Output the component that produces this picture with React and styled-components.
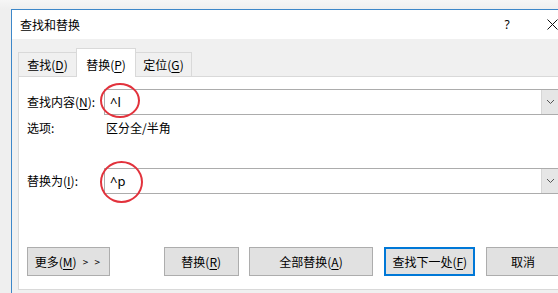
import React from "react";
import styled, { createGlobalStyle } from "styled-components";

const GlobalStyle = createGlobalStyle`
  html, body { margin: 0; padding: 0; }
  body {
    background: #f3f3f3;
    overflow: hidden;
    font-family: "Microsoft YaHei UI", "Noto Sans CJK SC", "Noto Sans", sans-serif;
    font-size: 12px;
    color: #000;
  }
`;

const Frame = styled.div`
  padding: 9px 0 0 11px;
  width: 558px;
  height: 293px;
  box-sizing: border-box;
  overflow: hidden;
  background: linear-gradient(180deg, #f6f6f6 0px, #efefef 9px);
`;

const Dialog = styled.div`
  width: 564px;
  height: 300px;
  flex: none;
  box-sizing: border-box;
  border-top: 1px solid #3d87c9;
  border-left: 1px solid #3d87c9;
  background: #f0f0f0;
  display: flex;
  flex-direction: column;
`;

const TitleBar = styled.div`
  height: 29px;
  background: #fff;
  display: flex;
  align-items: center;
  padding-left: 8px;
`;

const Title = styled.div`
  flex: 1;
  font-size: 12px;
  line-height: 16px;
`;

const TitleButton = styled.div`
  width: ${(p) => p.$w}px;
  height: 29px;
  display: flex;
  align-items: center;
  justify-content: center;
  font-family: "Segoe UI", "Noto Sans", "DejaVu Sans", sans-serif;
  font-size: 12px;
  margin-left: ${(p) => p.$ml || 0}px;
`;

const Body = styled.div`
  flex: 1;
  padding: 9px 0 0 6px;
  display: flex;
  flex-direction: column;
`;

const TabRow = styled.div`
  display: flex;
  align-items: flex-end;
  height: 29px;
  margin-bottom: -1px;
  position: relative;
  z-index: 1;
`;

const Tab = styled.div`
  box-sizing: border-box;
  width: ${(p) => p.$w}px;
  height: ${(p) => (p.$active ? 29 : 25)}px;
  margin-left: ${(p) => (p.$first ? 0 : -1)}px;
  border: 1px solid #d9d9d9;
  border-bottom: ${(p) => (p.$active ? "none" : "1px solid #d9d9d9")};
  background: ${(p) => (p.$active ? "#fff" : "#f0f0f0")};
  display: flex;
  align-items: center;
  justify-content: center;
  padding-top: ${(p) => (p.$active ? 2 : 0)}px;
  font-size: 12px;
  position: relative;
  z-index: ${(p) => (p.$active ? 2 : 1)};
`;

const U = styled.span`
  text-decoration: underline;
  text-underline-offset: 2px;
`;

const Panel = styled.div`
  box-sizing: border-box;
  height: 214px;
  background: #fff;
  border: 1px solid #d9d9d9;
  border-right: none;
  padding: 12px 15px 0 8px;
  display: flex;
  flex-direction: column;
`;

const FieldRow = styled.div`
  display: flex;
  align-items: center;
  margin-top: ${(p) => p.$mt || 0}px;
`;

const Label = styled.div`
  width: 77px;
  flex: none;
  font-size: 12px;
  line-height: 18px;
`;

const OptionText = styled.div`
  padding-left: 2px;
  font-size: 12px;
  line-height: 18px;
`;

const Combo = styled.div`
  flex: 1;
  height: 26px;
  box-sizing: border-box;
  border: 1px solid #acacac;
  display: flex;
  position: relative;
`;

const ComboText = styled.div`
  flex: 1;
  display: flex;
  align-items: center;
  padding-left: 5px;
  font-family: "Segoe UI", "Noto Sans", "DejaVu Sans", sans-serif;
  font-size: 13px;
`;

const ComboButton = styled.div`
  width: 17px;
  border-left: 1px solid #d6d6d6;
  background: #e6e6e6;
  display: flex;
  align-items: center;
  justify-content: center;
`;

const Ring = styled.div`
  position: absolute;
  left: ${(p) => p.$l}px;
  top: ${(p) => p.$t}px;
  width: ${(p) => p.$w}px;
  height: ${(p) => p.$h}px;
  border: 2px solid #e2323c;
  border-radius: 50%;
  box-sizing: border-box;
  pointer-events: none;
`;

const ButtonRow = styled.div`
  display: flex;
  margin-top: 53px;
`;

const Button = styled.div`
  box-sizing: border-box;
  width: ${(p) => p.$w}px;
  height: 29px;
  margin-left: ${(p) => p.$ml || 0}px;
  background: #e1e1e1;
  border: ${(p) => (p.$default ? "2px solid #0078d7" : "1px solid #adadad")};
  display: flex;
  align-items: center;
  justify-content: center;
  font-size: 12px;
  white-space: pre;
`;

const Arrows = styled.span`
  font-size: 10px;
  margin-left: 6px;
  letter-spacing: 2px;
`;

const Chevron = () => (
  <svg width="9" height="6" viewBox="0 0 9 6">
    <path d="M1 1 L4.5 4.5 L8 1" fill="none" stroke="#555" strokeWidth="1" />
  </svg>
);

const CloseIcon = () => (
  <svg width="11" height="11" viewBox="0 0 11 11">
    <path d="M0.5 0.5 L10.5 10.5 M10.5 0.5 L0.5 10.5" stroke="#111" strokeWidth="1" />
  </svg>
);

export default function App() {
  return (
    <>
      <GlobalStyle />
      <Frame>
        <Dialog>
          <TitleBar>
            <Title>查找和替换</Title>
            <TitleButton $w={30}>?</TitleButton>
            <TitleButton $w={46} $ml={7}>
              <CloseIcon />
            </TitleButton>
          </TitleBar>
          <Body>
            <TabRow>
              <Tab $w={59} $first>
                查找(<U>D</U>)
              </Tab>
              <Tab $w={60} $active>
                替换(<U>P</U>)
              </Tab>
              <Tab $w={57}>
                定位(<U>G</U>)
              </Tab>
            </TabRow>
            <Panel>
              <FieldRow>
                <Label>
                  查找内容(<U>N</U>):
                </Label>
                <Combo>
                  <ComboText>^l</ComboText>
                  <ComboButton>
                    <Chevron />
                  </ComboButton>
                  <Ring $l={-5} $t={-7} $w={40} $h={35} />
                </Combo>
              </FieldRow>
              <FieldRow $mt={4}>
                <Label>选项:</Label>
                <OptionText>区分全/半角</OptionText>
              </FieldRow>
              <FieldRow $mt={31}>
                <Label>
                  替换为(<U>I</U>):
                </Label>
                <Combo>
                  <ComboText>^p</ComboText>
                  <ComboButton>
                    <Chevron />
                  </ComboButton>
                  <Ring $l={-5} $t={-8} $w={43} $h={42} />
                </Combo>
              </FieldRow>
              <ButtonRow>
                <Button $w={83}>
                  更多(<U>M</U>)<Arrows>{"> >"}</Arrows>
                </Button>
                <Button $w={75} $ml={54}>
                  替换(<U>R</U>)
                </Button>
                <Button $w={125} $ml={10}>
                  全部替换(<U>A</U>)
                </Button>
                <Button $w={91} $ml={11} $default>
                  查找下一处(<U>F</U>)
                </Button>
                <Button $w={74} $ml={11}>
                  取消
                </Button>
              </ButtonRow>
            </Panel>
          </Body>
        </Dialog>
      </Frame>
    </>
  );
}
